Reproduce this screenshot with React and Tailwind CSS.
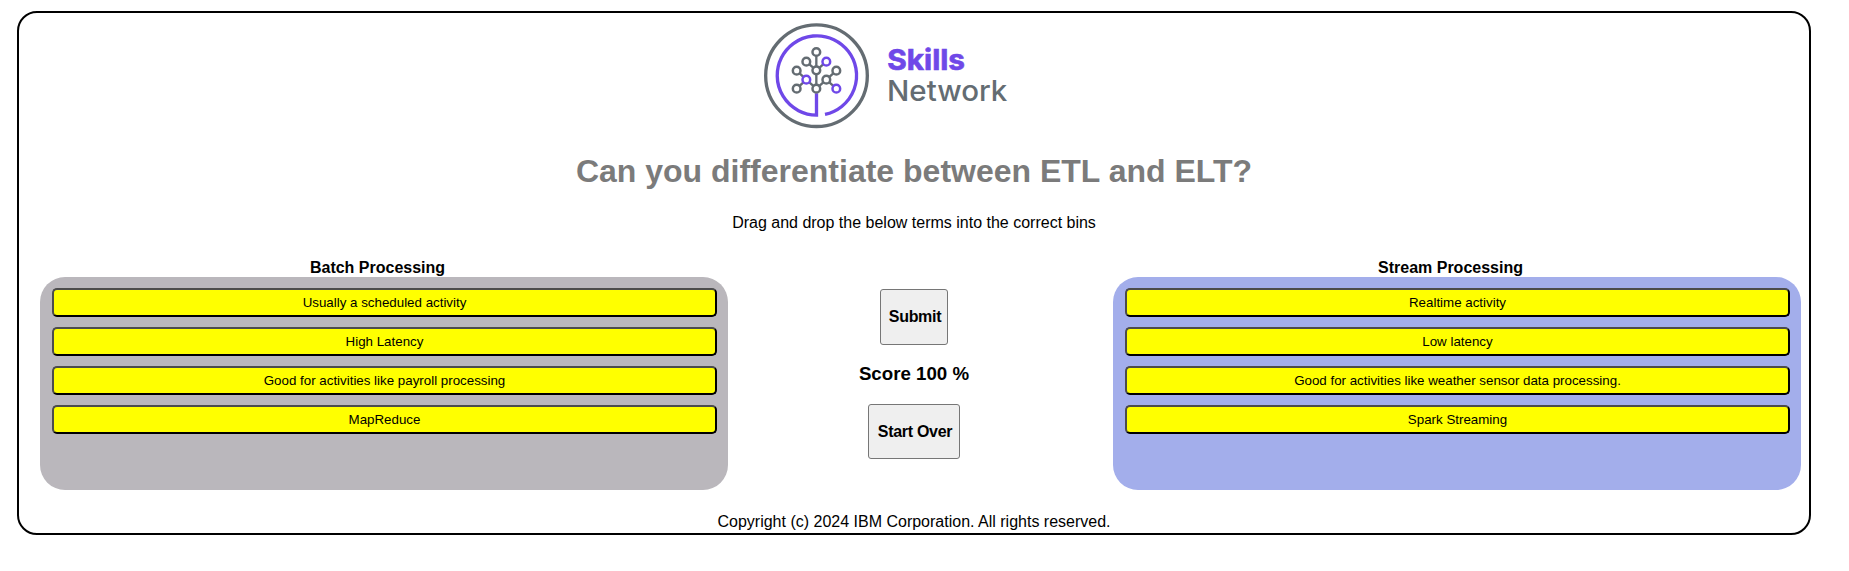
const GRAY = "#646c72";
const PURPLE = "#6f48e8";

const nodes = [
  [184, 111, GRAY],
  [154, 140, GRAY],
  [214, 140, PURPLE],
  [184, 166, GRAY],
  [125, 167, GRAY],
  [244, 167, GRAY],
  [154, 194, PURPLE],
  [214, 194, GRAY],
  [125, 221, GRAY],
  [184, 221, GRAY],
  [244, 221, PURPLE],
];

function Logo() {
  return (
    <svg className="ml-[736px] mt-0.5 block h-[120px] w-[270px]" viewBox="0 0 810 360" fill="none">
      <circle cx="184.5" cy="182" r="152.5" stroke={GRAY} strokeWidth="10" />
      <path d="M184.500 235V300.500A119 119 0 1 1 210 298" stroke={PURPLE} strokeWidth="10" />
      <path
        d="M184 111V221M154 140L184 166L214 140M125 167L154 194L184 221M154 194L125 221M244 167L184 221M214 194L244 221"
        stroke={GRAY}
        strokeWidth="7"
      />
      {nodes.map(([x, y, c]) => (
        <circle key={x + "-" + y} cx={x} cy={y} r="11.500" fill="#fff" stroke={c} strokeWidth="7.500" />
      ))}
      <text x="397" y="164" fontSize="86" fontWeight="700" fill={PURPLE} stroke={PURPLE} strokeWidth="2" textLength="233" lengthAdjust="spacingAndGlyphs" fontFamily="Inter, sans-serif">
        Skills
      </text>
      <text x="396" y="257" fontSize="86" fontWeight="500" fill={GRAY} textLength="361" lengthAdjust="spacingAndGlyphs" fontFamily="Inter, sans-serif">
        Network
      </text>
    </svg>
  );
}

function Bin({ title, items, color }) {
  return (
    <section className="w-[700px]">
      <h2 className="h-[19px] pr-px text-center text-base leading-[19px] font-bold">{title}</h2>
      <div className={`ml-3 flex h-[213px] flex-col gap-2.5 rounded-[25px] pt-[11px] pr-[11px] pl-3 ${color}`}>
        {items.map((item) => (
          <button
            key={item}
            className="h-[29px] rounded-[5px] border-2 border-t-[#4c4c4c] border-r-black border-b-black border-l-[#4c4c4c] bg-[#ffff00] text-[13.333px] leading-[15px]"
          >
            {item}
          </button>
        ))}
      </div>
    </section>
  );
}

export default function App() {
  return (
    <div className="h-[571px] bg-white pt-[11px] pl-[17px] font-['Liberation_Sans',Arial,sans-serif] text-black">
      <main className="flex h-[524px] w-[1794px] flex-col rounded-[20px] border-2 border-black">
        <Logo />
        <h1 className="mt-[18px] text-center text-[32px] leading-[37px] font-bold text-[#7b7b7b]">
          Can you differentiate between ETL and ELT?
        </h1>
        <p className="mt-[24px] text-center text-base leading-[18px]">Drag and drop the below terms into the correct bins</p>
        <div className="mt-[26px] flex justify-between pr-2 pl-[9px]">
          <Bin
            title="Batch Processing"
            color="bg-[#bab7bc]"
            items={["Usually a scheduled activity", "High Latency", "Good for activities like payroll processing", "MapReduce"]}
          />
          <div className="flex flex-col items-center pt-[31px] pr-px">
            <button className="h-14 w-[68px] rounded-[3px] border border-[#767676] bg-[#efefef] pl-0.5 text-base leading-[18px] font-bold tracking-[-0.3px]">
              Submit
            </button>
            <h3 className="mt-[18px] text-[18.720px] leading-[22px] font-bold">Score 100 %</h3>
            <button className="mt-[19px] h-[55px] w-[92px] rounded-[3px] border border-[#767676] bg-[#efefef] pl-0.5 text-base leading-[18px] font-bold tracking-[-0.3px]">
              Start Over
            </button>
          </div>
          <Bin
            title="Stream Processing"
            color="bg-[#a3aeeb]"
            items={["Realtime activity", "Low latency", "Good for activities like weather sensor data processing.", "Spark Streaming"]}
          />
        </div>
        <footer className="mt-[23px] text-center text-base leading-[18px]">
          Copyright (c) 2024 IBM Corporation. All rights reserved.
        </footer>
      </main>
    </div>
  );
}
